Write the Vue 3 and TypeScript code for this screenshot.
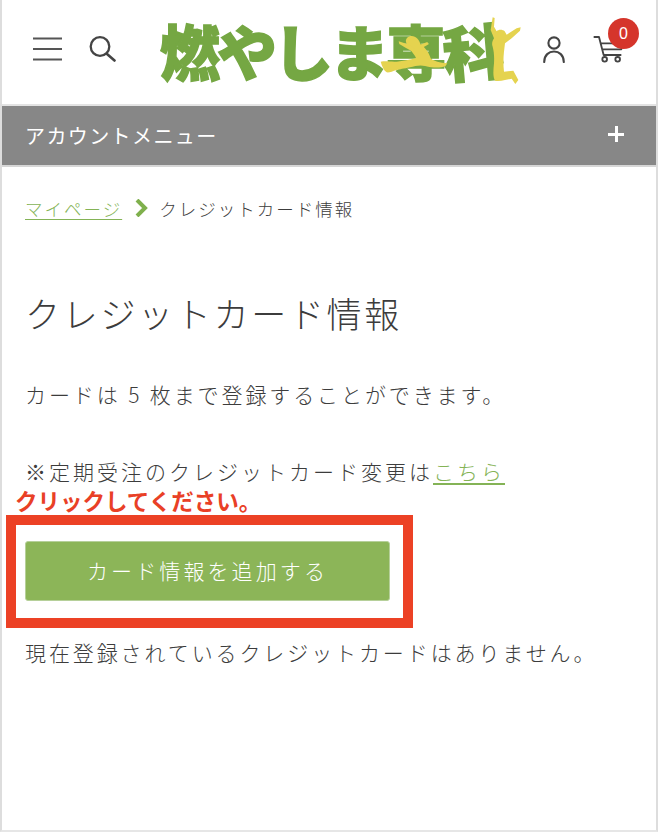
<template>
  <div class="page">
    <header class="site-header">
      <div class="header-left">
        <button class="icon-btn" aria-label="menu">
          <svg width="29" height="24" viewBox="0 0 29 24">
            <path d="M0 1.5h29M0 12h29M0 22.5h29" fill="none" stroke="#555" stroke-width="2" />
          </svg>
        </button>
        <button class="icon-btn" aria-label="search">
          <svg width="27" height="26" viewBox="0 0 27 26">
            <circle cx="11" cy="10.5" r="9.3" fill="none" stroke="#444" stroke-width="2.3" />
            <path d="M18 18l7.5 6.5" fill="none" stroke="#444" stroke-width="2.6" stroke-linecap="round" />
          </svg>
        </button>
      </div>
      <div class="logo">
        <div class="logo-text">
          <span>燃</span><span class="tilt-a">や</span><span>し</span><span>ま</span><span>専</span><span class="tilt-b">科</span>
        </div>
        <svg class="logo-figures" width="160" height="80" viewBox="0 0 480 240">
          <path
            d="M32 155 C50 152 60 156 80 155 C100 153 120 150 138 144 C132 128 112 115 108 96 C106 86 114 78 125 78 C138 78 148 90 152 104 C168 114 178 130 182 145 C192 155 210 158 232 160 L226 169 C210 174 190 174 165 168 C150 164 135 168 120 172 C100 176 90 178 80 180 C68 184 58 188 50 187 C42 182 36 170 32 155 Z"
            fill="#e5d34f"
          />
          <path d="M86 94 L118 104 L134 116 L126 124 L108 114 L88 102 Z" fill="#e5d34f" />
          <path d="M150 104 L172 96 L176 103 L156 114 Z" fill="#e5d34f" />
          <path
            d="M368 22 L374 24 L372 50 L380 64 C385 58 398 58 404 64 L410 74 L440 55 L452 52 L450 62 L425 85 L405 100 C402 125 398 150 402 185 L430 182 L445 210 L436 222 L425 206 L405 210 C395 212 385 214 375 212 C368 200 370 180 372 160 C373 140 372 125 368 110 C364 100 368 92 372 85 L362 60 Z"
            fill="#e5d34f"
          />
        </svg>
      </div>
      <div class="header-right">
        <button class="icon-btn" aria-label="account">
          <svg width="22" height="27" viewBox="0 0 22 27">
            <circle cx="11" cy="7" r="5.6" fill="none" stroke="#444" stroke-width="2.1" />
            <path d="M1.2 26 C1.2 19 6 15.5 11 15.5 S20.8 19 20.8 26" fill="none" stroke="#444" stroke-width="2.1" stroke-linecap="round" />
          </svg>
        </button>
        <button class="icon-btn" aria-label="cart">
          <svg width="30" height="28" viewBox="0 0 90 84">
            <path d="M2 6H18L32 60H85M24 25H88L85 43H28" fill="none" stroke="#444" stroke-width="5.5" stroke-linejoin="round" />
            <circle cx="35" cy="73" r="7" fill="none" stroke="#444" stroke-width="5.5" />
            <circle cx="74" cy="73" r="7" fill="none" stroke="#444" stroke-width="5.5" />
          </svg>
          <span class="badge">{{ cartCount }}</span>
        </button>
      </div>
    </header>

    <div class="account-bar">
      <span>アカウントメニュー</span>
      <span class="plus"></span>
    </div>

    <main class="content">
      <nav class="breadcrumb">
        <a href="#" class="crumb-link">マイページ</a>
        <svg class="crumb-sep" width="14" height="18" viewBox="0 0 14 18">
          <path d="M3 1l8 8-8 8" fill="none" stroke="#7fb04c" stroke-width="4" />
        </svg>
        <span>クレジットカード情報</span>
      </nav>

      <h1 class="title">クレジットカード情報</h1>

      <p class="note first">カードは 5 枚まで登録することができます。</p>
      <p class="note note-link">※定期受注のクレジットカード変更は<a href="#">こちら</a></p>

      <div class="add-row">
        <button class="add-btn">カード情報を追加する</button>
        <div class="callout">
          <span class="callout-label">クリックしてください。</span>
          <div class="callout-box"></div>
        </div>
      </div>

      <p class="note empty">現在登録されているクレジットカードはありません。</p>
    </main>
  </div>
</template>

<script setup lang="ts">
const cartCount: number = 0;
</script>

<style>
html,
body {
  margin: 0;
  background: #fff;
}
</style>

<style scoped>
.page {
  box-sizing: border-box;
  width: 658px;
  height: 832px;
  overflow: hidden;
  background: #fff;
  border-left: 2px solid #ddd;
  border-right: 2px solid #ddd;
  border-bottom: 2px solid #e6e6e6;
  font-family: "Noto Sans CJK JP", "Noto Sans", sans-serif;
  font-weight: 300;
  color: #3c3c3c;
}

.site-header {
  position: relative;
  display: flex;
  justify-content: space-between;
  align-items: center;
  height: 104px;
  padding: 0 33px 0 31px;
  box-sizing: border-box;
}

.header-left,
.header-right {
  display: flex;
  align-items: center;
  margin-bottom: 6px;
}

.header-left {
  gap: 27px;
}

.header-right {
  gap: 28px;
}

.icon-btn {
  position: relative;
  display: flex;
  padding: 0;
  border: 0;
  background: none;
}

.logo {
  position: absolute;
  left: 158px;
  top: 10px;
  width: 370px;
  height: 80px;
}

.logo-text {
  display: flex;
  font-size: 60px;
  font-weight: 900;
  line-height: 80px;
  letter-spacing: -3.5px;
  color: #75a743;
  -webkit-text-stroke: 1.5px #75a743;
  white-space: nowrap;
}

.logo-text span {
  display: block;
}

.tilt-a {
  transform: rotate(-8deg);
}

.tilt-b {
  transform: rotate(-5deg);
}

.logo-figures {
  position: absolute;
  left: 210px;
  top: 0;
}

.badge {
  position: absolute;
  top: -17px;
  right: -16px;
  width: 31px;
  height: 31px;
  border-radius: 50%;
  background: #d5352b;
  color: #fff;
  font-size: 16px;
  font-weight: 400;
  line-height: 31px;
  text-align: center;
}

.account-bar {
  display: flex;
  justify-content: space-between;
  align-items: center;
  height: 63px;
  padding: 0 32px 0 23px;
  box-sizing: border-box;
  background: #878787;
  border-top: 2px solid #e3e3e3;
  border-bottom: 2px solid #d6d6d6;
  color: #fff;
  font-size: 20px;
  font-weight: 400;
  letter-spacing: 1.4px;
}

.plus {
  position: relative;
  width: 16px;
  height: 16px;
  margin-top: -3px;
}

.plus::before,
.plus::after {
  content: "";
  position: absolute;
  background: #fff;
}

.plus::before {
  left: 0;
  top: 6.5px;
  width: 16px;
  height: 3px;
}

.plus::after {
  left: 6.5px;
  top: 0;
  width: 3px;
  height: 16px;
}

.content {
  padding: 0 23px;
}

.breadcrumb {
  display: flex;
  align-items: center;
  height: 30px;
  margin-top: 26px;
  font-size: 17.5px;
  letter-spacing: 2px;
  white-space: nowrap;
}

.crumb-link {
  color: #84b356;
  text-decoration: underline;
  text-underline-offset: 3px;
}

.crumb-sep {
  margin: 0 11px 0 12px;
}

.title {
  margin: 65px 0 0;
  font-size: 35px;
  font-weight: 300;
  line-height: 50px;
  letter-spacing: 2.7px;
  white-space: nowrap;
}

.note {
  margin: 0;
  font-size: 21px;
  line-height: 32px;
  letter-spacing: 2.9px;
  white-space: nowrap;
}

.first {
  margin-top: 40px;
}

.note-link {
  margin-top: 45px;
  letter-spacing: 3px;
}

.note-link a {
  color: #84b356;
  text-decoration: underline;
  text-underline-offset: 3px;
}

.add-row {
  position: relative;
  margin-top: 54px;
}

.add-btn {
  display: block;
  width: 365px;
  height: 60px;
  padding: 0 0 3px;
  border: 1px solid #b6d09a;
  border-radius: 3px;
  background: #8cb558;
  color: #fff;
  font: inherit;
  font-size: 21px;
  letter-spacing: 3.1px;
}

.callout {
  position: absolute;
  left: -19px;
  top: -52px;
}

.callout-label {
  display: block;
  margin-left: 9px;
  height: 26px;
  color: #e94026;
  font-size: 22.5px;
  font-weight: 700;
  line-height: 22px;
  white-space: nowrap;
}

.callout-box {
  box-sizing: border-box;
  width: 407px;
  height: 113px;
  border: 10px solid #ec4125;
}

.empty {
  margin-top: 35px;
}
</style>
